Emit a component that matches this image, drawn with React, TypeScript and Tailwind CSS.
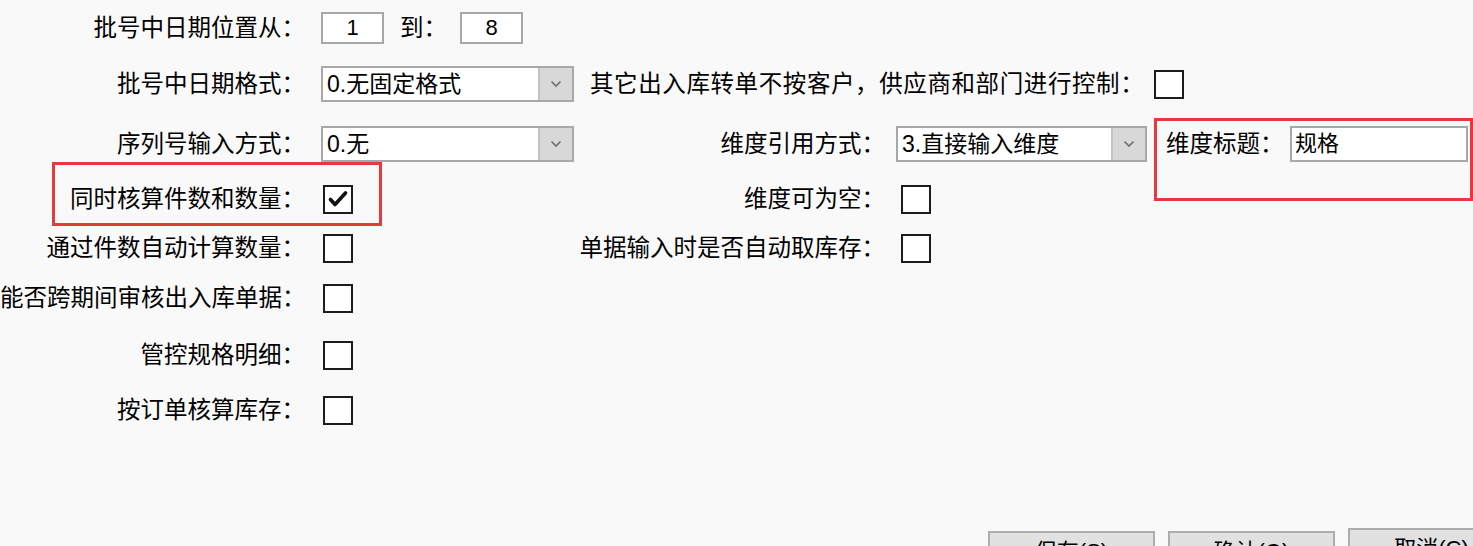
const FONT = "font-['Liberation_Sans','Noto_Sans_CJK_SC',sans-serif]";

function Box({ checked = false }: { checked?: boolean }) {
  return (
    <div className="w-[30px] h-[29px] border-2 border-[#1c1c1c] bg-white flex items-center justify-center">
      {checked && (
        <svg width="20" height="18" viewBox="0 0 20 18">
          <path d="M2.5 9.5 L7 14.5 L17.5 3" fill="none" stroke="#111" strokeWidth="3.6" strokeLinecap="round" strokeLinejoin="round" />
        </svg>
      )}
    </div>
  );
}

function TextBox({ value, w, center = false }: { value: string; w: string; center?: boolean }) {
  return (
    <div className={`${w} h-full border-2 border-[#a8a8a8] bg-white flex items-center px-[3px] text-[22px] ${center ? "justify-center" : ""}`}>
      {value}
    </div>
  );
}

function Select({ value, w }: { value: string; w: string }) {
  return (
    <div className={`${w} h-9 border-2 border-[#a8a8a8] bg-white flex`}>
      <div className="flex-1 flex items-center pl-[4px] text-[23px] leading-none">{value}</div>
      <div className="w-[34px] bg-[#d8d8d8] border-l-2 border-[#c4c4c4] flex items-center justify-center">
        <svg width="12" height="8" viewBox="0 0 12 8">
          <path d="M1.5 1.5 L6 6 L10.5 1.5" fill="none" stroke="#6e6e6e" strokeWidth="1.6" />
        </svg>
      </div>
    </div>
  );
}

function Label({ text, w }: { text: string; w: string }) {
  return <div className={`${w} shrink-0 text-right whitespace-nowrap pt-[2px]`}>{text}</div>;
}

export default function App() {
  return (
    <div className={`relative w-[1473px] h-[546px] overflow-hidden bg-[#f9f9f9] text-black text-[23.5px] leading-none ${FONT}`}>
      <div className="flex flex-col">
        {/* row 1 */}
        <div className="flex items-center h-8 mt-[12px]">
          <Label text="批号中日期位置从：" w="w-[305px]" />
          <div className="ml-4 h-8 flex items-center">
            <TextBox value="1" w="w-[63px]" center />
            <span className="ml-4 w-[60px] pt-[2px]">到：</span>
            <TextBox value="8" w="w-[63px]" center />
          </div>
        </div>

        {/* row 2 */}
        <div className="flex items-center h-9 mt-[22px]">
          <Label text="批号中日期格式：" w="w-[305px]" />
          <div className="ml-4">
            <Select value="0.无固定格式" w="w-[253px]" />
          </div>
          <span className="ml-4 whitespace-nowrap pt-[2px] tracking-[0.6px]">其它出入库转单不按客户，供应商和部门进行控制：</span>
          <div className="ml-[10px]">
            <Box />
          </div>
        </div>

        {/* row 3 */}
        <div className="flex items-center h-9 mt-[24px]">
          <div className="w-[574px] flex items-center">
            <Label text="序列号输入方式：" w="w-[305px]" />
            <div className="ml-4">
              <Select value="0.无" w="w-[253px]" />
            </div>
          </div>
          <Label text="维度引用方式：" w="w-[311px]" />
          <div className="ml-[11px]">
            <Select value="3.直接输入维度" w="w-[251px]" />
          </div>
          <span className="ml-[19px] w-[124px] whitespace-nowrap pt-[2px]">维度标题：</span>
          <div className="h-9">
            <TextBox value="规格" w="w-[178px]" />
          </div>
        </div>

        {/* row 4 */}
        <div className="flex items-center h-9 mt-[19px]">
          <div className="w-[574px] flex items-center">
            <Label text="同时核算件数和数量：" w="w-[305px]" />
            <div className="ml-[18px]">
              <Box checked />
            </div>
          </div>
          <Label text="维度可为空：" w="w-[311px]" />
          <div className="ml-4">
            <Box />
          </div>
        </div>

        {/* row 5 */}
        <div className="flex items-center h-9 mt-[13px]">
          <div className="w-[574px] flex items-center">
            <Label text="通过件数自动计算数量：" w="w-[305px]" />
            <div className="ml-[18px]">
              <Box />
            </div>
          </div>
          <Label text="单据输入时是否自动取库存：" w="w-[311px]" />
          <div className="ml-4">
            <Box />
          </div>
        </div>

        {/* row 6-8 */}
        {[
          { t: "能否跨期间审核出入库单据：", mt: "mt-[14px]" },
          { t: "管控规格明细：", mt: "mt-[21px]" },
          { t: "按订单核算库存：", mt: "mt-[19px]" },
        ].map((r) => (
          <div key={r.t} className={`flex items-center h-9 ${r.mt}`}>
            <Label text={r.t} w="w-[305px]" />
            <div className="ml-[18px]">
              <Box />
            </div>
          </div>
        ))}

        {/* buttons */}
        <div className="flex items-start gap-[13px] ml-[988px] mt-[100px]">
          {["保存(S)", "确认(O)", "取消(C)"].map((b, i) => (
            <div
              key={b}
              className={`shrink-0 w-[167px] h-[42px] border-2 border-[#adadad] bg-[#e1e1e1] flex items-center justify-center text-[22px] ${i < 2 ? "mt-[3px]" : ""}`}
            >
              {b}
            </div>
          ))}
        </div>
      </div>

      {/* annotation boxes */}
      <div className="absolute left-[52px] top-[162px] w-[330px] h-[64px] border-[3px] border-[#e5393d] pointer-events-none" />
      <div className="absolute left-[1154px] top-[118px] w-[319px] h-[83px] border-[3px] border-[#e5393d] pointer-events-none" />
    </div>
  );
}
